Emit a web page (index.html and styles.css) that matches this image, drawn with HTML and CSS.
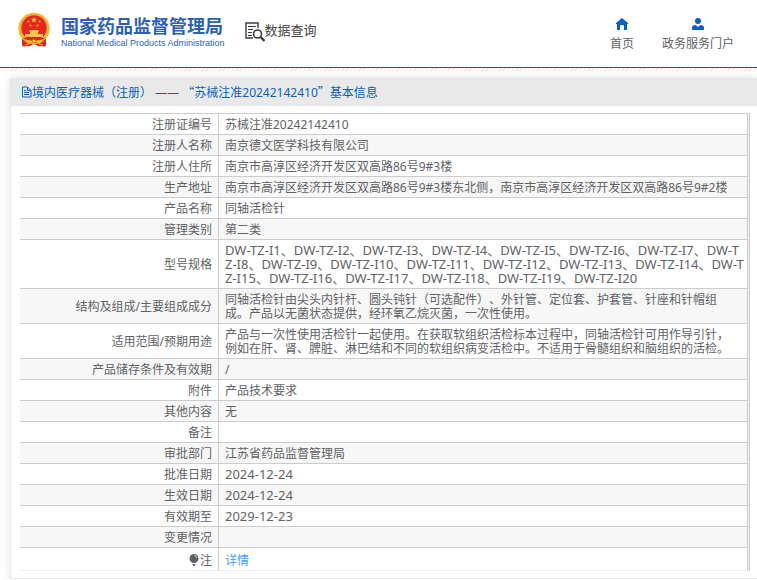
FILE: index.html
```html
<!DOCTYPE html>
<html lang="zh-CN">
<head>
<meta charset="utf-8">
<title>国家药品监督管理局 数据查询</title>
<link rel="stylesheet" href="styles.css">
</head>
<body>
<header class="header">
  <div class="brand">
    <svg class="emblem" viewBox="0 0 34 36" aria-hidden="true">
      <path d="M5 25 L5 33 Q5 34.500 7 34.500 L13 34 L17 32 L21 34 L27 34.500 Q29 34.500 29 33 L29 25Z" fill="#dc251c"/>
      <circle cx="17" cy="16.500" r="15.700" fill="#f3bd35"/>
      <circle cx="17" cy="16.500" r="14.300" fill="none" stroke="#df9a28" stroke-width=".7" stroke-dasharray="2 1"/>
      <circle cx="17" cy="16" r="12.700" fill="#e5281f"/>
      <path d="M17 5l.8 1.900 2.100.1-1.600 1.300.6 2L17 9.200l-1.900 1.100.6-2L14.100 7l2.100-.1z" fill="#ffd34a"/>
      <g fill="#f7b93c"><circle cx="11.300" cy="9.600" r="1"/><circle cx="22.700" cy="9.600" r="1"/><circle cx="13.500" cy="13.500" r="1"/><circle cx="20.500" cy="13.500" r="1"/></g>
      <path d="M13 18h8l1 2h-1v2h5v3H8v-3h5v-2h-1z" fill="#f9c846"/>
      <path d="M6 26h22l-3 2.500H9z" fill="#e5281f"/>
      <path d="M8 27q5 3 9 1 4 2 9-1l-3 5-4-2-2 1.500-2-1.500-4 2z" fill="#f5bd38"/>
      <circle cx="17" cy="29" r="1.800" fill="#ffd861" stroke="#d93020" stroke-width=".6"/>
      <path d="M8 33q4 0 5-2M26 33q-4 0-5-2" fill="none" stroke="#f3a52f"/>
    </svg>
    <div class="brand-text">
      <span class="brand-cn">国家药品监督管理局</span>
      <span class="brand-en">National Medical Products Administration</span>
    </div>
  </div>
  <div class="query">
    <svg class="query-icon" viewBox="0 0 20 20" fill="none" stroke="#3b3b46" aria-hidden="true">
      <path d="M8 16H1V1h12v5" stroke-width="1.400"/>
      <path d="M3 4.500h8M3 7.500h5M3 10.500h4M3 13.500h4" stroke-width="1"/>
      <circle cx="12.500" cy="12" r="4" stroke-width="1.600"/>
      <path d="M15.500 15l4 4" stroke-width="2.400"/>
    </svg>
    <span>数据查询</span>
  </div>
  <nav class="nav">
    <a href="#">
      <svg viewBox="0 0 12 12" aria-hidden="true"><path d="M6 0 L0 5v1h1v6h3V8q0-1 2-1t2 1v4h3V6h1V5z" fill="#0b5fc0"/></svg>
      <span>首页</span>
    </a>
    <a href="#">
      <svg viewBox="0 0 12 12" aria-hidden="true"><circle cx="6" cy="3" r="3" fill="#0b5fc0"/><path d="M0 12v-2q0-3 3.500-3L6 9l2.500-2Q12 7 12 10v2z" fill="#0b5fc0"/></svg>
      <span>政务服务门户</span>
    </a>
  </nav>
</header>
<div class="hatch"></div>
<main class="panel">
  <h1 class="panel-title">
    <svg viewBox="0 0 11 12" fill="none" stroke="#0b5fc0" aria-hidden="true"><path d="M1.500 1h5L10 4.500V11H1.500zM6.500 1v3.500H10M3 6.500h5M3 8.500h5M3 4.500h2"/></svg>
    <span>境内医疗器械（注册） —— <span class="quote">“</span>苏械注准20242142410<span class="quote">”</span>基本信息</span>
  </h1>
  <div class="table-frame">
    <table class="info">
      <tbody>
        <tr><th scope="row">注册证编号</th><td>苏械注准20242142410</td></tr>
        <tr><th scope="row">注册人名称</th><td>南京德文医学科技有限公司</td></tr>
        <tr><th scope="row">注册人住所</th><td>南京市高淳区经济开发区双高路86号9#3楼</td></tr>
        <tr><th scope="row">生产地址</th><td>南京市高淳区经济开发区双高路86号9#3楼东北侧，南京市高淳区经济开发区双高路86号9#2楼</td></tr>
        <tr><th scope="row">产品名称</th><td>同轴活检针</td></tr>
        <tr><th scope="row">管理类别</th><td>第二类</td></tr>
        <tr><th scope="row">型号规格</th><td class="code">DW-TZ-I1、DW-TZ-I2、DW-TZ-I3、DW-TZ-I4、DW-TZ-I5、DW-TZ-I6、DW-TZ-I7、DW-TZ-I8、DW-TZ-I9、DW-TZ-I10、DW-TZ-I11、DW-TZ-I12、DW-TZ-I13、DW-TZ-I14、DW-TZ-I15、DW-TZ-I16、DW-TZ-I17、DW-TZ-I18、DW-TZ-I19、DW-TZ-I20</td></tr>
        <tr><th scope="row">结构及组成/主要组成成分</th><td>同轴活检针由尖头内针杆、圆头钝针（可选配件）、外针管、定位套、护套管、针座和针帽组<br>成。产品以无菌状态提供，经环氧乙烷灭菌，一次性使用。</td></tr>
        <tr><th scope="row">适用范围/预期用途</th><td>产品与一次性使用活检针一起使用。在获取软组织活检标本过程中，同轴活检针可用作导引针，<br>例如在肝、肾、脾脏、淋巴结和不同的软组织病变活检中。不适用于骨髓组织和脑组织的活检。</td></tr>
        <tr><th scope="row">产品储存条件及有效期</th><td>/</td></tr>
        <tr><th scope="row">附件</th><td>产品技术要求</td></tr>
        <tr><th scope="row">其他内容</th><td>无</td></tr>
        <tr><th scope="row">备注</th><td></td></tr>
        <tr><th scope="row">审批部门</th><td>江苏省药品监督管理局</td></tr>
        <tr><th scope="row">批准日期</th><td class="code">2024-12-24</td></tr>
        <tr><th scope="row">生效日期</th><td class="code">2024-12-24</td></tr>
        <tr><th scope="row">有效期至</th><td class="code">2029-12-23</td></tr>
        <tr><th scope="row">变更情况</th><td></td></tr>
        <tr class="note"><th scope="row"><svg viewBox="0 0 10 12" aria-hidden="true"><path d="M5 0a4.500 4.500 0 0 1 2.500 8.200L6.500 9h-3l-1-.8A4.500 4.500 0 0 1 5 0zM3.500 10h3v1l-1 1h-1l-1-1z" fill="#606266"/><path d="M5.500 1.500q2 .3 2.200 2.300" stroke="#fff" fill="none" stroke-width=".8"/></svg>注</th><td><a href="#">详情</a></td></tr>
      </tbody>
    </table>
  </div>
</main>
</body>
</html>
```
FILE: styles.css
```css
* {
  box-sizing: border-box;
}

body {
  margin: 0;
  background: #fff;
  color: #606266;
  font-family: "Noto Sans", "Noto Sans CJK SC", sans-serif;
  font-size: 12px;
  line-height: 14px;
  text-spacing-trim: space-all;
  overflow-x: hidden;
}

a {
  color: inherit;
  text-decoration: none;
}

.header {
  display: flex;
  align-items: center;
  height: 68px;
  padding: 0 23px 8px 17px;
  border-bottom: 1px solid #0d57ab;
}

.brand {
  display: flex;
  align-items: center;
  gap: 10px;
}

.emblem {
  width: 34px;
  height: 36px;
}

.brand-text {
  display: flex;
  flex-direction: column;
  gap: 2px;
  padding-top: 4px;
  color: #2d5fb3;
  white-space: nowrap;
}

.brand-cn {
  font-family: "Noto Sans CJK SC", sans-serif;
  font-size: 18px;
  font-weight: 700;
  line-height: 20px;
}

.brand-en {
  font-family: "Liberation Sans", sans-serif;
  font-size: 9px;
  line-height: 12px;
}

.query {
  display: flex;
  align-items: flex-start;
  margin-left: 20px;
  padding-top: 4px;
  color: #444;
  font-family: "Noto Sans CJK SC", sans-serif;
  font-size: 13px;
  line-height: 16px;
}

.query-icon {
  width: 20px;
  height: 20px;
}

.nav {
  display: flex;
  gap: 28px;
  margin-left: auto;
  padding-top: 9px;
}

.nav a {
  display: flex;
  flex-direction: column;
  align-items: center;
  gap: 7px;
}

.nav svg {
  width: 12px;
  height: 12px;
}

.hatch {
  height: 3px;
  background: repeating-linear-gradient(135deg, #e8e8e8 0 1px, #fff 1px 3px);
}

.panel {
  margin: 7px 0 0 10px;
  border: solid #ebebeb;
  border-width: 0 0 1px 1px;
  box-shadow: 0 0 8px rgba(0, 0, 0, 0.12);
}

.panel-title {
  display: flex;
  align-items: center;
  height: 28px;
  margin: 0;
  padding: 0 0 0 10px;
  background: #e9e9e9;
  color: #0b5fc0;
  font-size: 12px;
  font-weight: 400;
}

.panel-title svg {
  width: 11px;
  height: 12px;
}

.quote {
  font-family: "Noto Sans CJK SC", sans-serif;
}

.table-frame {
  margin: 7px 7px 7px 9px;
  padding-right: 1px;
  border-right: 1px solid #ccc;
  background: #ebeef5;
}

.info {
  width: 100%;
  table-layout: fixed;
  border-spacing: 0;
  border-right: 1px solid #ccc;
  background: #fff;
}

.info th,
.info td {
  height: 21px;
  padding: 4px 6px 2px;
  border-top: 1px solid #ccc;
  font-weight: 400;
  word-break: break-all;
}

.info th {
  width: 199px;
  border-right: 1px solid #ccc;
  text-align: right;
}

.info td {
  padding-right: 2px;
  text-align: left;
}

.info .code {
  padding-top: 3px;
  padding-bottom: 3px;
  font-size: 13px;
}

.info tr:nth-child(even) {
  background: #f7f7f7;
}

.info .note th,
.info .note td {
  height: 24px;
  padding-top: 5px;
  border-bottom: 1px solid #ebeef5;
}

.note svg {
  width: 10px;
  height: 12px;
  margin-right: 1px;
  vertical-align: -1px;
}

.note a {
  color: #409eff;
}
```
